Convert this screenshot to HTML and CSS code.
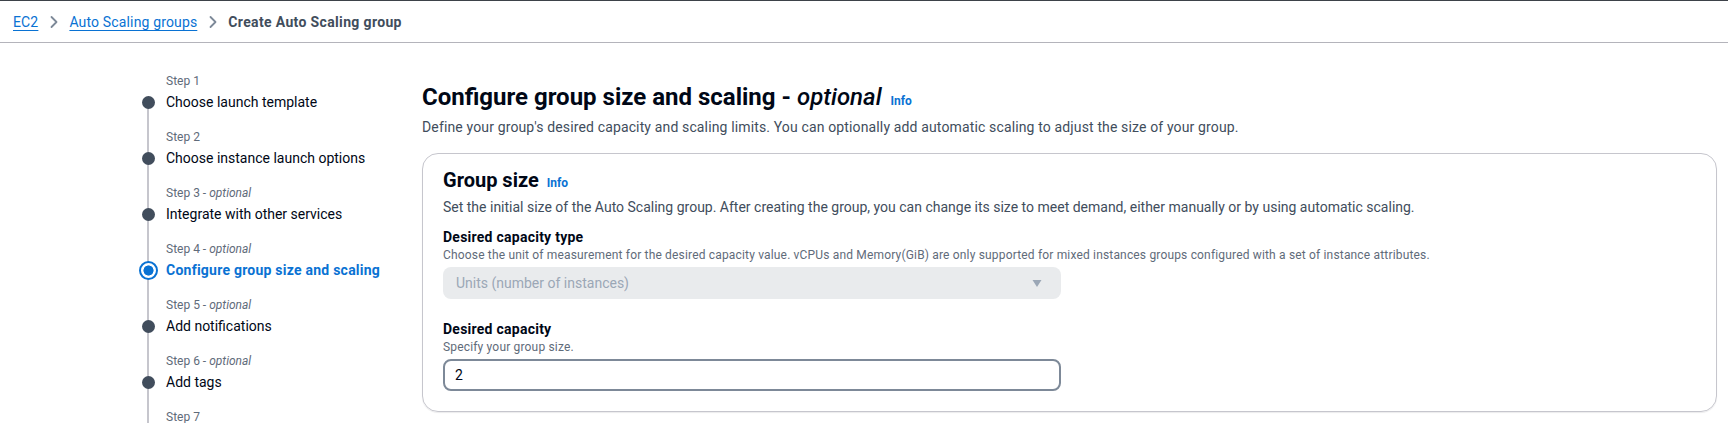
FILE: index.html
```html
<!DOCTYPE html>
<html lang="en">
<head>
<meta charset="utf-8">
<title>Create Auto Scaling group</title>
<link rel="stylesheet" href="styles.css">
</head>
<body>
<header class="topbar">
  <nav class="crumbs">
    <a class="crumb-link" href="#">EC2</a>
    <svg class="chev" viewBox="0 0 16 16" width="16" height="16"><polyline points="5.5,3 10.5,8 5.5,13" fill="none" stroke="#7d8998" stroke-width="1.8" stroke-linecap="round" stroke-linejoin="round"/></svg>
    <a class="crumb-link" href="#">Auto Scaling groups</a>
    <svg class="chev" viewBox="0 0 16 16" width="16" height="16"><polyline points="5.5,3 10.5,8 5.5,13" fill="none" stroke="#7d8998" stroke-width="1.8" stroke-linecap="round" stroke-linejoin="round"/></svg>
    <span class="crumb-current">Create Auto Scaling group</span>
  </nav>
</header>
<div class="layout">
  <ol class="steps">
    <li class="step">
      <span class="rail rail-first"></span>
      <span class="step-label">Step 1</span>
      <span class="marker"><span class="dot"></span></span>
      <span class="step-title">Choose launch template</span>
    </li>
    <li class="step">
      <span class="rail"></span>
      <span class="step-label">Step 2</span>
      <span class="marker"><span class="dot"></span></span>
      <span class="step-title">Choose instance launch options</span>
    </li>
    <li class="step">
      <span class="rail"></span>
      <span class="step-label">Step 3 - <i>optional</i></span>
      <span class="marker"><span class="dot"></span></span>
      <span class="step-title">Integrate with other services</span>
    </li>
    <li class="step">
      <span class="rail"></span>
      <span class="step-label">Step 4 - <i>optional</i></span>
      <span class="marker"><span class="dot dot-active"></span></span>
      <span class="step-title step-title-active">Configure group size and scaling</span>
    </li>
    <li class="step">
      <span class="rail"></span>
      <span class="step-label">Step 5 - <i>optional</i></span>
      <span class="marker"><span class="dot"></span></span>
      <span class="step-title">Add notifications</span>
    </li>
    <li class="step">
      <span class="rail"></span>
      <span class="step-label">Step 6 - <i>optional</i></span>
      <span class="marker"><span class="dot"></span></span>
      <span class="step-title">Add tags</span>
    </li>
    <li class="step">
      <span class="rail"></span>
      <span class="step-label">Step 7</span>
    </li>
  </ol>
  <main class="main">
    <h1 class="page-title">Configure group size and scaling - <i class="opt">optional</i> <a class="info" href="#">Info</a></h1>
    <p class="page-desc">Define your group's desired capacity and scaling limits. You can optionally add automatic scaling to adjust the size of your group.</p>
    <section class="card">
      <h2 class="card-title">Group size <a class="info" href="#">Info</a></h2>
      <p class="card-desc">Set the initial size of the Auto Scaling group. After creating the group, you can change its size to meet demand, either manually or by using automatic scaling.</p>
      <div class="field">
        <div class="field-label">Desired capacity type</div>
        <div class="field-help">Choose the unit of measurement for the desired capacity value. vCPUs and Memory(GiB) are only supported for mixed instances groups configured with a set of instance attributes.</div>
        <div class="select">
          <span class="select-value">Units (number of instances)</span>
          <svg class="caret" viewBox="0 0 12 12" width="12" height="12"><polygon points="1.5,3 10.5,3 6,10" fill="#9ba7b6"/></svg>
        </div>
      </div>
      <div class="field field-second">
        <div class="field-label">Desired capacity</div>
        <div class="field-help">Specify your group size.</div>
        <div class="input">2</div>
      </div>
    </section>
  </main>
</div>
</body>
</html>
```
FILE: styles.css
```css
* { box-sizing: border-box; }

html, body {
  margin: 0;
  padding: 0;
  background: #ffffff;
  font-family: Roboto, "Noto Sans", "Liberation Sans", sans-serif;
  color: #000716;
  overflow: hidden;
}

.topbar {
  height: 43px;
  border-top: 1px solid #3d4249;
  border-bottom: 1px solid #b4b4bb;
  padding-left: 13px;
  display: flex;
  align-items: center;
}

.crumbs {
  display: flex;
  align-items: center;
  font-size: 14px;
  line-height: 20px;
}

.crumb-link {
  color: #0972d3;
  text-decoration: underline;
  text-underline-offset: 3px;
  letter-spacing: 0.15px;
}

.chev {
  margin: 0 7px 0 8px;
  display: block;
}

.crumb-current {
  color: #414d5c;
  font-weight: 700;
  letter-spacing: 0.35px;
}

.layout {
  display: flex;
  align-items: flex-start;
  padding: 29px 11px 0 138px;
  gap: 40px;
}

.steps {
  list-style: none;
  margin: 0;
  padding: 0;
  width: 244px;
  flex: none;
}

.step {
  display: grid;
  grid-template-columns: 20px 1fr;
  grid-template-rows: 20px 20px 16px;
  column-gap: 8px;
}

.rail {
  grid-column: 1;
  grid-row: 1 / 4;
  background: linear-gradient(#c6c6cd, #c6c6cd) center top / 2px 100% no-repeat;
}

.rail-first {
  grid-row: 2 / 4;
  background: linear-gradient(#c6c6cd, #c6c6cd) center 10px / 2px calc(100% - 10px) no-repeat;
}

.step-label {
  grid-column: 2;
  grid-row: 1;
  align-self: start;
  font-size: 12px;
  line-height: 18px;
  color: #5f6b7a;
}

.marker {
  grid-column: 1;
  grid-row: 2;
  display: flex;
  align-items: center;
  justify-content: center;
}

.dot {
  width: 13px;
  height: 13px;
  border-radius: 50%;
  background: #414d5c;
}

.dot-active {
  width: 19px;
  height: 19px;
  border: 2.5px solid #0972d3;
  background: radial-gradient(circle, #0972d3 0 4.8px, #ffffff 5.3px);
}

.step-title {
  grid-column: 2;
  grid-row: 2;
  font-size: 14px;
  line-height: 20px;
  color: #000716;
  white-space: nowrap;
}

.step-title-active {
  color: #0972d3;
  font-weight: 700;
  letter-spacing: 0.24px;
}

.main {
  flex: 1;
  min-width: 0;
  padding-top: 10px;
}

.page-title {
  margin: 0;
  font-size: 24px;
  line-height: 30px;
  font-weight: 700;
  color: #000716;
}

.opt {
  font-weight: 500;
}

.info {
  color: #0972d3;
  font-size: 12px;
  font-weight: 700;
  text-decoration: none;
  margin-left: 3px;
  letter-spacing: 0;
}

.page-desc {
  margin: 1px 0 0;
  font-size: 14px;
  line-height: 20px;
  color: #414d5c;
  letter-spacing: 0.14px;
}

.card {
  margin-top: 16px;
  border: 1px solid #c6c6cd;
  border-radius: 16px;
  padding: 14px 20px 20px;
  box-shadow: 0 1px 1px rgba(0, 7, 22, 0.08);
}

.card-title {
  margin: 0;
  font-size: 20px;
  line-height: 24px;
  font-weight: 700;
  color: #000716;
}

.card-desc {
  margin: 2px 0 0;
  font-size: 14px;
  line-height: 20px;
  color: #414d5c;
}

.field {
  margin-top: 10px;
}

.field-second {
  margin-top: 20px;
}

.field-label {
  font-size: 14px;
  line-height: 20px;
  font-weight: 700;
  color: #000716;
  letter-spacing: 0.25px;
}

.field-help {
  font-size: 12px;
  line-height: 16px;
  color: #5f6b7a;
  letter-spacing: 0.17px;
}

.select {
  margin-top: 4px;
  width: 618px;
  height: 32px;
  border-radius: 8px;
  background: #e9ebed;
  display: flex;
  align-items: center;
  justify-content: space-between;
  padding: 0 18px 0 13px;
  font-size: 14px;
  color: #9ba7b6;
}

.caret {
  display: block;
}

.input {
  margin-top: 4px;
  width: 618px;
  height: 32px;
  border: 2px solid #7d8998;
  border-radius: 8px;
  display: flex;
  align-items: center;
  padding-left: 10px;
  font-size: 14px;
  color: #000716;
}
```
